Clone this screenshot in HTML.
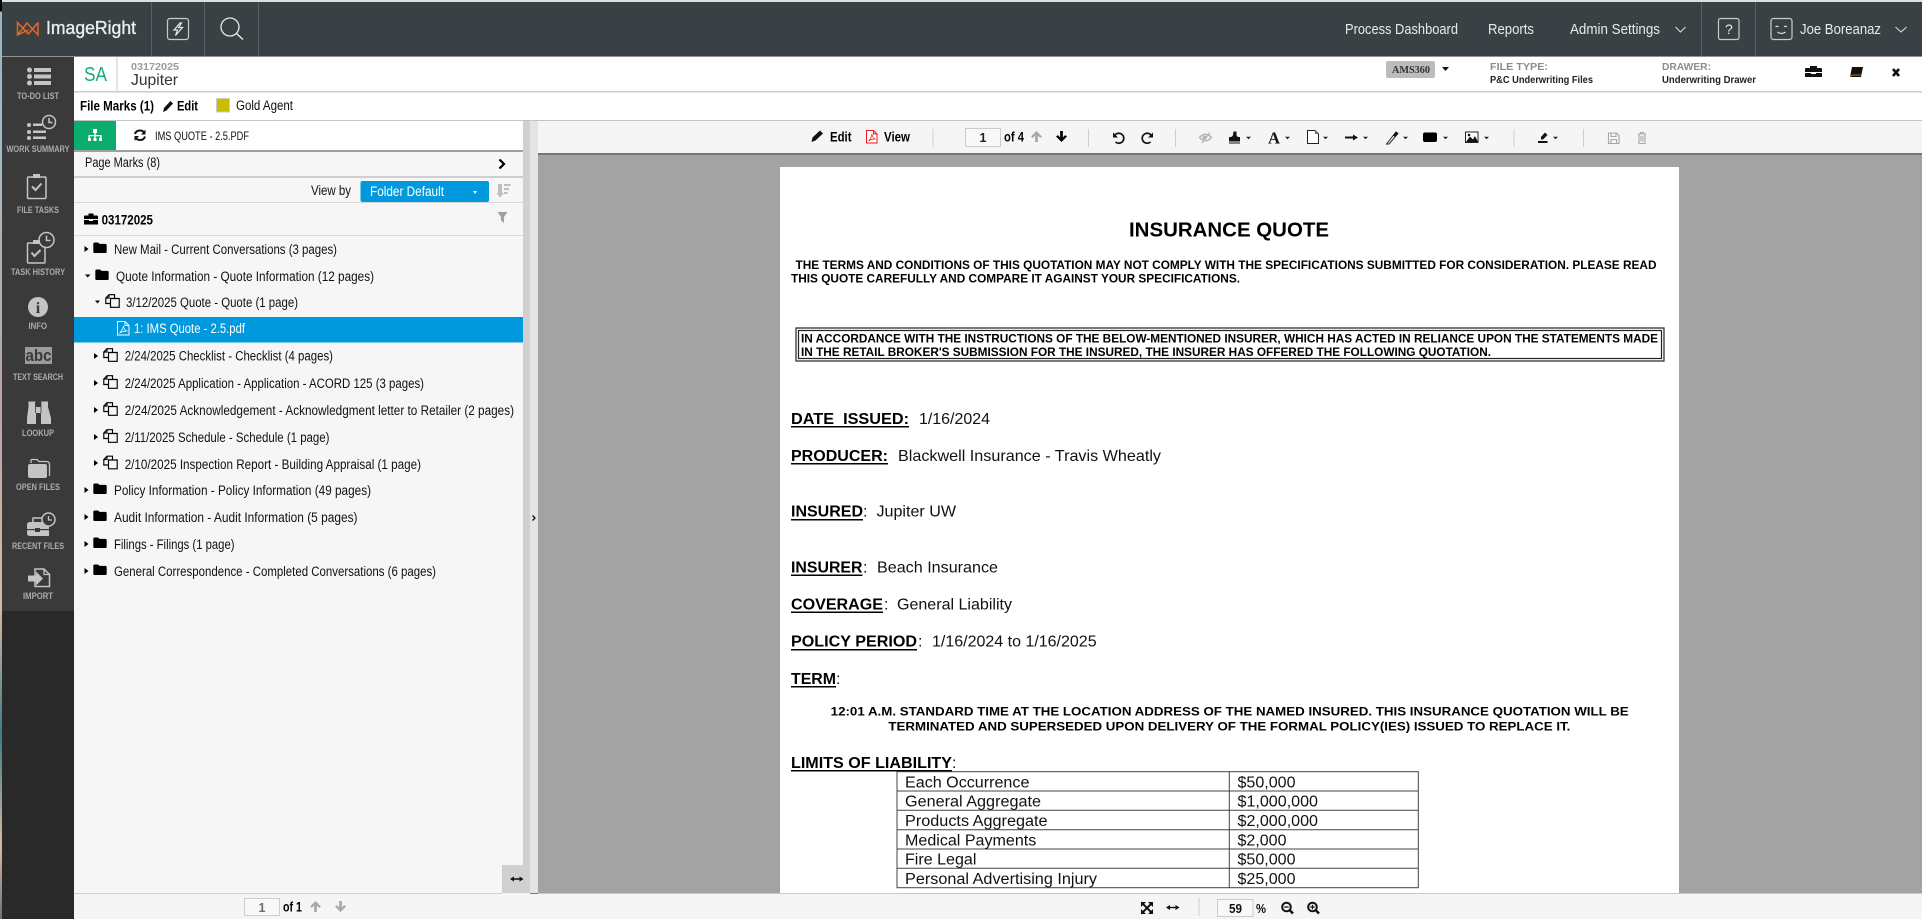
<!DOCTYPE html>
<html><head><meta charset="utf-8"><title>ImageRight</title>
<style>
html,body{margin:0;padding:0;background:#f6f6f6;width:1922px;height:919px;overflow:hidden}
svg{display:block;position:absolute;left:0;top:0}
text{font-family:"Liberation Sans",sans-serif;white-space:pre}
.t{font-size:13.5px;fill:#111;transform:translateY(-.8px)}
.b{font-size:13.5px;fill:#000;font-weight:bold;transform:translateY(-.5px)}
.n{font-size:14.5px;fill:#e8eaea}
.s{font-size:9.5px;fill:#a8acb0;font-weight:bold}
.g{font-size:10.5px;fill:#8c8c8c;font-weight:bold}
.d{font-size:10.5px;fill:#222;font-weight:bold}
.h{font-size:16px;fill:#000;font-weight:bold}
.v{font-size:16px;fill:#111}
.c{font-size:12px;fill:#000;font-weight:bold}
.r{font-size:15.5px;fill:#111}
</style></head><body>
<svg width="1922" height="919" viewBox="0 0 1922 919" xmlns="http://www.w3.org/2000/svg">
<defs>
<linearGradient id="strip" x1="0" y1="0" x2="0" y2="1">
<stop offset="0" stop-color="#000"/><stop offset=".012" stop-color="#000"/><stop offset=".013" stop-color="#9cb4c0"/><stop offset=".17" stop-color="#a5b8c2"/><stop offset=".44" stop-color="#b9a3a6"/><stop offset=".66" stop-color="#d8b8a4"/><stop offset=".8" stop-color="#3f7c84"/><stop offset=".92" stop-color="#d8b8a4"/><stop offset="1" stop-color="#6a7378"/>
</linearGradient>
<symbol id="folder" viewBox="0 0 14 11"><path d="M0 1.5Q0 0 1.5 0H5L6.500 1.500H12.500Q14 1.500 14 3V9.500Q14 11 12.500 11H1.500Q0 11 0 9.500Z" fill="#000"/></symbol>
<symbol id="docs" viewBox="0 0 15 14"><path d="M5.500 9.500H.8V4L4 .7H9.500V4.500M4 .7V4H.8M5.500 4.500H14.200V13.300H5.500Z" fill="none" stroke="#000" stroke-width="1.150"/></symbol>
<symbol id="tri" viewBox="0 0 4 6"><path d="M0 0L4 3L0 6Z" fill="#000"/></symbol>
<symbol id="up" viewBox="0 0 12 12"><path d="M6 0L12 6L10 7.500L7.500 5V12H4.500V5L2 7.500L0 6Z"/></symbol>
<symbol id="down" viewBox="0 0 12 12"><path d="M6 12L12 6L10 4.500L7.500 7V0H4.500V7L2 4.500L0 6Z"/></symbol>
<symbol id="car" viewBox="0 0 6 3"><path d="M0 0H6L3 3Z" fill="#222"/></symbol>
</defs>

<!-- base -->
<rect width="1922" height="919" fill="#f6f6f6"/>
<!-- viewer -->
<rect x="538" y="121" width="1384" height="798" fill="#a3a3a3"/>
<!-- document page -->
<rect x="780" y="167" width="899" height="727" fill="#fff"/>
<text class="h" style="font-size:20.500px" x="1129" y="236.500" textLength="200" lengthAdjust="spacingAndGlyphs">INSURANCE QUOTE</text>
<text class="c" x="795.500" y="269" textLength="861" lengthAdjust="spacingAndGlyphs">THE TERMS AND CONDITIONS OF THIS QUOTATION MAY NOT COMPLY WITH THE SPECIFICATIONS SUBMITTED FOR CONSIDERATION. PLEASE READ</text>
<text class="c" x="791" y="282.700" textLength="449" lengthAdjust="spacingAndGlyphs">THIS QUOTE CAREFULLY AND COMPARE IT AGAINST YOUR SPECIFICATIONS.</text>
<rect x="796" y="328" width="868" height="33" fill="none" stroke="#222" stroke-width="1.200"/>
<rect x="798.500" y="330.500" width="863" height="28" fill="none" stroke="#222" stroke-width="1.200"/>
<text class="c" x="801" y="342.300" textLength="857" lengthAdjust="spacingAndGlyphs">IN ACCORDANCE WITH THE INSTRUCTIONS OF THE BELOW-MENTIONED INSURER, WHICH HAS ACTED IN RELIANCE UPON THE STATEMENTS MADE</text>
<text class="c" x="801" y="356" textLength="690" lengthAdjust="spacingAndGlyphs">IN THE RETAIL BROKER'S SUBMISSION FOR THE INSURED, THE INSURER HAS OFFERED THE FOLLOWING QUOTATION.</text>

<text class="h" x="791" y="424" textLength="118" lengthAdjust="spacingAndGlyphs">DATE  ISSUED:</text><rect x="791" y="426" width="118" height="1.500"/>
<text class="v" x="919" y="424" textLength="71" lengthAdjust="spacingAndGlyphs">1/16/2024</text>
<text class="h" x="791" y="461" textLength="97" lengthAdjust="spacingAndGlyphs">PRODUCER:</text><rect x="791" y="463" width="97" height="1.500"/>
<text class="v" x="898" y="461" textLength="263" lengthAdjust="spacingAndGlyphs">Blackwell Insurance - Travis Wheatly</text>
<text class="h" x="791" y="516.700" textLength="72" lengthAdjust="spacingAndGlyphs">INSURED</text><rect x="791" y="519" width="72" height="1.500"/><text class="v" x="863" y="516.700">:</text>
<text class="v" x="876.500" y="516.700" textLength="79.500" lengthAdjust="spacingAndGlyphs">Jupiter UW</text>
<text class="h" x="791" y="572.300" textLength="71.500" lengthAdjust="spacingAndGlyphs">INSURER</text><rect x="791" y="574.500" width="71.500" height="1.500"/><text class="v" x="863" y="572.300">:</text>
<text class="v" x="877" y="572.300" textLength="121" lengthAdjust="spacingAndGlyphs">Beach Insurance</text>
<text class="h" x="791" y="609.300" textLength="92" lengthAdjust="spacingAndGlyphs">COVERAGE</text><rect x="791" y="611.500" width="92" height="1.500"/><text class="v" x="884" y="609.300">:</text>
<text class="v" x="897" y="609.300" textLength="115" lengthAdjust="spacingAndGlyphs">General Liability</text>
<text class="h" x="791" y="646.700" textLength="126" lengthAdjust="spacingAndGlyphs">POLICY PERIOD</text><rect x="791" y="649" width="126" height="1.500"/><text class="v" x="918" y="646.700">:</text>
<text class="v" x="932" y="646.700" textLength="164.600" lengthAdjust="spacingAndGlyphs">1/16/2024 to 1/16/2025</text>
<text class="h" x="791" y="684" textLength="45" lengthAdjust="spacingAndGlyphs">TERM</text><rect x="791" y="686" width="45" height="1.500"/><text class="v" x="836" y="684">:</text>
<text class="c" x="830.700" y="715.300" textLength="798" lengthAdjust="spacingAndGlyphs">12:01 A.M. STANDARD TIME AT THE LOCATION ADDRESS OF THE NAMED INSURED. THIS INSURANCE QUOTATION WILL BE</text>
<text class="c" x="888.400" y="730.300" textLength="682" lengthAdjust="spacingAndGlyphs">TERMINATED AND SUPERSEDED UPON DELIVERY OF THE FORMAL POLICY(IES) ISSUED TO REPLACE IT.</text>
<text class="h" x="791" y="768" textLength="161" lengthAdjust="spacingAndGlyphs">LIMITS OF LIABILITY</text><rect x="791" y="770" width="161" height="1.500"/><text class="v" x="952" y="768">:</text>
<g fill="none" stroke="#444" stroke-width="1">
<rect x="897" y="771.700" width="521.300" height="116"/>
<path d="M897 791H1418M897 810.300H1418M897 829.700H1418M897 849H1418M897 868.300H1418M1229.300 772V888"/>
</g>
<text class="r" x="905" y="787.300" textLength="124.400" lengthAdjust="spacingAndGlyphs">Each Occurrence</text>
<text class="r" x="905" y="806.700" textLength="136" lengthAdjust="spacingAndGlyphs">General Aggregate</text>
<text class="r" x="905" y="826" textLength="142.600" lengthAdjust="spacingAndGlyphs">Products Aggregate</text>
<text class="r" x="905" y="845.300" textLength="131.300" lengthAdjust="spacingAndGlyphs">Medical Payments</text>
<text class="r" x="905" y="864.700" textLength="71.400" lengthAdjust="spacingAndGlyphs">Fire Legal</text>
<text class="r" x="905" y="884" textLength="192" lengthAdjust="spacingAndGlyphs">Personal Advertising Injury</text>
<text class="r" x="1237.500" y="787.300" textLength="58" lengthAdjust="spacingAndGlyphs">$50,000</text>
<text class="r" x="1237.500" y="806.700" textLength="80.500" lengthAdjust="spacingAndGlyphs">$1,000,000</text>
<text class="r" x="1237.500" y="826" textLength="80.500" lengthAdjust="spacingAndGlyphs">$2,000,000</text>
<text class="r" x="1237.500" y="845.300" textLength="49" lengthAdjust="spacingAndGlyphs">$2,000</text>
<text class="r" x="1237.500" y="864.700" textLength="58" lengthAdjust="spacingAndGlyphs">$50,000</text>
<text class="r" x="1237.500" y="884" textLength="58" lengthAdjust="spacingAndGlyphs">$25,000</text>

<!-- left strip & topbar -->
<rect x="0" y="0" width="2" height="919" fill="url(#strip)"/>
<rect x="2" y="0" width="1920" height="2" fill="#dcdfe0"/>
<rect x="2" y="2" width="1920" height="54" fill="#394145"/>
<rect x="2" y="56" width="1920" height="1" fill="#8d9295"/>
<g fill="#596165"><rect x="151" y="2" width="1" height="54"/><rect x="204" y="2" width="1" height="54"/><rect x="258" y="2" width="1" height="54"/><rect x="1701" y="2" width="1" height="54"/><rect x="1755" y="2" width="1" height="54"/></g>
<path d="M28.500 30L17.500 35V22.500L28.500 34M27.500 22.500L17.500 35M38 22.500V35L27.500 23.500M38 22.500L28 34.500" fill="none" stroke="#e8642c" stroke-width="1.500"/>
<text x="46" y="34" style="font-size:18.500px;fill:#eceeee;stroke:#eceeee;stroke-width:.35" textLength="90" lengthAdjust="spacingAndGlyphs">ImageRight</text>
<rect x="167.500" y="18.500" width="21" height="21" rx="2.500" fill="none" stroke="#c8cbcc" stroke-width="1.200"/>
<path d="M180 23L174 30H177.500L175.500 35.500L182.500 27.500H178.500L181.500 23Z" fill="none" stroke="#e4e6e6" stroke-width="1.200"/>
<circle cx="230" cy="27" r="9" fill="none" stroke="#e6e8e8" stroke-width="1.300"/><path d="M236.500 33.500L243 39.500" stroke="#e6e8e8" stroke-width="1.500"/>
<text class="n" x="1345" y="34" textLength="113" lengthAdjust="spacingAndGlyphs">Process Dashboard</text>
<text class="n" x="1488" y="34" textLength="46" lengthAdjust="spacingAndGlyphs">Reports</text>
<text class="n" x="1570" y="34" textLength="90" lengthAdjust="spacingAndGlyphs">Admin Settings</text>
<path d="M1675.500 27L1680.500 32L1685.500 27" fill="none" stroke="#d5d8d8" stroke-width="1.100"/>
<rect x="1718.500" y="18.500" width="20.500" height="21" rx="2" fill="none" stroke="#c8cbcc" stroke-width="1.200"/>
<text class="n" x="1725" y="34" style="font-size:14px">?</text>
<rect x="1771" y="18.500" width="21" height="21" rx="2.500" fill="none" stroke="#c8cbcc" stroke-width="1.200"/>
<path d="M1775.500 27Q1777 25.500 1778.500 27M1784 27Q1785.500 25.500 1787 27M1777.500 32Q1781.500 35 1785.500 32" fill="none" stroke="#dfe1e1" stroke-width="1.100"/>
<text class="n" x="1800" y="34" textLength="81" lengthAdjust="spacingAndGlyphs">Joe Boreanaz</text>
<path d="M1895.500 27L1901 32L1906.500 27" fill="none" stroke="#d5d8d8" stroke-width="1.100"/>

<!-- sidebar -->
<rect x="2" y="57" width="72" height="554" fill="#3a3a3a"/>
<rect x="2" y="611" width="72" height="308" fill="#292929"/>
<g fill="#c4c4c4">
<circle cx="29.500" cy="70" r="2.500"/><circle cx="29.500" cy="76.500" r="2.500"/><circle cx="29.500" cy="83" r="2.500"/>
<rect x="34" y="68" width="17" height="4"/><rect x="34" y="74.500" width="17" height="4"/><rect x="34" y="81" width="17" height="4"/>
<circle cx="29" cy="125" r="2"/><circle cx="29" cy="132" r="2"/><circle cx="29" cy="138" r="2"/>
<rect x="33" y="123.500" width="9" height="2.500"/><rect x="33" y="130.500" width="13" height="2.500"/><rect x="33" y="136.500" width="13" height="2.500"/>
</g>
<g fill="none" stroke="#c4c4c4" stroke-width="1.500">
<circle cx="49" cy="122" r="6.500"/><path d="M49 118V122.500H52.500"/>
<rect x="27.500" y="177" width="18.500" height="21.500" rx="1"/><path d="M32 186.500L35.500 190L41.500 183.500" stroke-width="2"/>
<rect x="27.500" y="243" width="17.500" height="20" rx="1"/><path d="M31.500 252.500L34.500 256L40.500 250" stroke-width="2"/>
<circle cx="46.500" cy="240" r="7.500" fill="#3a3a3a"/><path d="M46.500 235.500V240.500H50.500"/>
</g>
<rect x="33" y="174" width="7" height="4" fill="#c4c4c4"/><rect x="33" y="240" width="7" height="4" fill="#c4c4c4"/>
<circle cx="38" cy="307" r="10" fill="#c4c4c4"/><text x="38" y="313" text-anchor="middle" style="font-family:'Liberation Serif',serif;font-size:16px;font-weight:bold;fill:#3a3a3a">i</text>
<rect x="25" y="347" width="27" height="17" fill="#9a9a9a"/><text x="25.500" y="361" style="font-size:17px;font-weight:bold;fill:#3a3a3a" textLength="26" lengthAdjust="spacingAndGlyphs">abc</text>
<path d="M28.500 401.500H35.500V407H41V401.500H48V407L51 418V424H41V413H36V424H27V418L28.500 407Z" fill="#c4c4c4"/><path d="M35.500 402V413M41 402V413" stroke="#3a3a3a" stroke-width=".8"/>
<path d="M31 463V460.500Q31 459.500 32 459.500H37L39 461.500H46Q49.500 461.500 49.500 464.500V476" fill="none" stroke="#c4c4c4" stroke-width="1.300"/>
<rect x="28" y="464" width="19" height="14" rx="2" fill="#c4c4c4"/>
<path d="M27 525Q27 522 30 522H49V536H30Q27 536 27 533Z" fill="#c4c4c4"/><rect x="27" y="529" width="22" height="1.200" fill="#3a3a3a"/><rect x="35" y="528" width="5" height="4" fill="#3a3a3a"/><path d="M33 522V518H44V522" fill="none" stroke="#c4c4c4" stroke-width="1.500"/>
<circle cx="48.500" cy="519.500" r="6.500" fill="#3a3a3a" stroke="#c4c4c4" stroke-width="1.500"/><path d="M48.500 516V520H52" fill="none" stroke="#c4c4c4" stroke-width="1.300"/>
<path d="M35 586.500V569H44L49.500 574.500V586.500Z" fill="none" stroke="#c4c4c4" stroke-width="1.500"/><path d="M44 569V574.500H49.500" fill="none" stroke="#c4c4c4" stroke-width="1.300"/><path d="M28 575.500H36V571.500L43 578.500L36 585.500V581.500H28Z" fill="#c4c4c4"/>
<text class="s" x="17" y="99" textLength="42" lengthAdjust="spacingAndGlyphs">TO-DO LIST</text>
<text class="s" x="6.500" y="152" textLength="63" lengthAdjust="spacingAndGlyphs">WORK SUMMARY</text>
<text class="s" x="17" y="213" textLength="42" lengthAdjust="spacingAndGlyphs">FILE TASKS</text>
<text class="s" x="11" y="275" textLength="54" lengthAdjust="spacingAndGlyphs">TASK HISTORY</text>
<text class="s" x="28.500" y="329" textLength="18.500" lengthAdjust="spacingAndGlyphs">INFO</text>
<text class="s" x="13" y="380" textLength="50" lengthAdjust="spacingAndGlyphs">TEXT SEARCH</text>
<text class="s" x="22" y="436" textLength="32" lengthAdjust="spacingAndGlyphs">LOOKUP</text>
<text class="s" x="16" y="490" textLength="44" lengthAdjust="spacingAndGlyphs">OPEN FILES</text>
<text class="s" x="12" y="549" textLength="52" lengthAdjust="spacingAndGlyphs">RECENT FILES</text>
<text class="s" x="23" y="599" textLength="30" lengthAdjust="spacingAndGlyphs">IMPORT</text>

<!-- header row -->
<rect x="74" y="57" width="1848" height="34" fill="#fff"/>
<rect x="74" y="91" width="1848" height="1.500" fill="#ccc"/>
<rect x="116.500" y="57" width="1" height="34" fill="#ccc"/>
<text x="84" y="81" style="font-size:20px;fill:#12ad74" textLength="23" lengthAdjust="spacingAndGlyphs">SA</text>
<text x="131" y="70" style="font-size:10.500px;font-weight:bold;fill:#9b9b9b" textLength="48" lengthAdjust="spacingAndGlyphs">03172025</text>
<text x="131" y="85" style="font-size:16px;fill:#333" textLength="47" lengthAdjust="spacingAndGlyphs">Jupiter</text>
<rect x="1386" y="61" width="49" height="17" rx="2" fill="#bcbcbc"/>
<text x="1392" y="73" style="font-family:'Liberation Serif',serif;font-size:10px;font-weight:bold;fill:#333" textLength="38" lengthAdjust="spacingAndGlyphs">AMS360</text>
<path d="M1442 67H1449L1445.500 71Z" fill="#111"/>
<text class="g" x="1490" y="70" textLength="58" lengthAdjust="spacingAndGlyphs">FILE TYPE:</text>
<text class="d" x="1490" y="83" textLength="103" lengthAdjust="spacingAndGlyphs">P&amp;C Underwriting Files</text>
<text class="g" x="1662" y="70" textLength="49" lengthAdjust="spacingAndGlyphs">DRAWER:</text>
<text class="d" x="1662" y="83" textLength="94" lengthAdjust="spacingAndGlyphs">Underwriting Drawer</text>
<path d="M1805 69Q1805 68 1806 68H1810V66H1817V68H1821Q1822 68 1822 69V72H1805ZM1805 73H1811V74H1816V73H1822V77H1805Z" fill="#111"/>
<path d="M1852 67H1863L1861 77H1850Z" fill="#111"/><path d="M1850 77Q1851 75 1853 75H1861" stroke="#e88a30" stroke-width=".8" fill="none"/>
<path d="M1893 69L1899 76M1899 69L1893 76" stroke="#111" stroke-width="2.600"/>

<!-- file marks row -->
<rect x="74" y="92.500" width="1848" height="27.500" fill="#fff"/>
<rect x="74" y="120" width="1848" height="1.200" fill="#c4c4c4"/>
<text class="b" x="80" y="111" textLength="74" lengthAdjust="spacingAndGlyphs">File Marks (1)</text>
<path d="M163 112L164 108L170.500 101L173 103.500L166.500 110.500Z" fill="#111"/>
<text class="b" x="177" y="111" textLength="21" lengthAdjust="spacingAndGlyphs">Edit</text>
<rect x="216.500" y="98.500" width="13" height="13.500" fill="#c5bf00" stroke="#ccc"/>
<text class="t" x="236" y="111" textLength="57" lengthAdjust="spacingAndGlyphs">Gold Agent</text>

<!-- left panel -->
<rect x="74" y="121" width="449" height="29" fill="#fff"/>
<rect x="74" y="121" width="42" height="29" fill="#0bad6d"/>
<path d="M93 129H97V133H93ZM94.300 133H95.700V135H101.500V138H100V136.300H95.700V138H94.300V136.300H90V138H88.500V135H94.300Z M88 138H91V141H88ZM93.500 138H96.500V141H93.500ZM99 138H102V141H99Z" fill="#fff"/>
<g fill="none" stroke="#111" stroke-width="2"><path d="M135 134Q136 130.500 140 130.500Q143 130.500 144.500 133"/><path d="M145 136.500Q144 140 140 140Q137 140 135.500 137.500"/></g>
<path d="M145.500 129.500V134.500H141ZM134.500 141V136H139Z" fill="#111"/>
<text x="155" y="140" style="font-size:11.500px;fill:#111" textLength="94" lengthAdjust="spacingAndGlyphs">IMS QUOTE - 2.5.PDF</text>
<rect x="74" y="150" width="449" height="2" fill="#a0a0a0"/>
<text class="t" x="85" y="168" textLength="75" lengthAdjust="spacingAndGlyphs">Page Marks (8)</text>
<path d="M499.500 159.500L504 164L499.500 168.500" fill="none" stroke="#000" stroke-width="2.200"/>
<rect x="74" y="176" width="449" height="2" fill="#cfcfcf"/>
<text class="t" x="311" y="196" textLength="40" lengthAdjust="spacingAndGlyphs">View by</text>
<rect x="360.500" y="181" width="128.500" height="21" rx="2" fill="#0099dd"/>
<text class="t" style="fill:#fff" x="370" y="197" textLength="74" lengthAdjust="spacingAndGlyphs">Folder Default</text>
<path d="M473 191H477L475 194Z" fill="#fff"/>
<g fill="#bdbdbd"><path d="M498 184H502V193H504L500 197.500L496.500 193H498Z"/><rect x="504" y="184" width="6.500" height="2"/><rect x="504" y="188" width="5" height="2"/><rect x="504" y="192" width="3.500" height="2"/></g>
<rect x="74" y="202" width="449" height="1" fill="#d8d8d8"/>
<path d="M84 216.500Q84 215.500 85 215.500H88.500V213.500H93.500V215.500H97Q98 215.500 98 216.500V219H84ZM84 220H89V221H93V220H98V224.500H84Z" fill="#000"/>
<text class="b" x="101.600" y="225" textLength="51.400" lengthAdjust="spacingAndGlyphs">03172025</text>
<path d="M497.500 212H507.500L504 217V223L501 220.500V217Z" fill="#a0a0a0"/>
<rect x="74" y="235" width="449" height="1" fill="#dcdcdc"/>

<!-- tree -->
<use href="#tri" x="84.500" y="246" width="4" height="6"/><use href="#folder" x="93" y="242.500" width="14" height="10.500"/>
<text class="t" x="114" y="255" textLength="223" lengthAdjust="spacingAndGlyphs">New Mail - Current Conversations (3 pages)</text>
<path d="M85 274.500H90.500L87.700 277.500Z" fill="#000"/><use href="#folder" x="95" y="269.500" width="14" height="10.500"/>
<text class="t" x="116" y="282" textLength="258" lengthAdjust="spacingAndGlyphs">Quote Information - Quote Information (12 pages)</text>
<path d="M95 300.500H100L97.500 303.500Z" fill="#000"/><use href="#docs" x="105" y="294" width="15" height="14"/>
<text class="t" x="126" y="308" textLength="172" lengthAdjust="spacingAndGlyphs">3/12/2025 Quote - Quote (1 page)</text>

<rect x="74" y="317" width="449" height="25.500" fill="#0099dd"/>
<path d="M117.500 321.500H125L129 325.500V335H117.500Z M125 321.500V325.500H129" fill="none" stroke="#fff" stroke-width="1"/>
<path d="M119.500 333Q122 331 123.500 326Q124 331 127.500 331Q123 331 119.500 333Z" fill="none" stroke="#fff" stroke-width=".8"/>
<text class="t" style="fill:#fff" x="134" y="334" textLength="111" lengthAdjust="spacingAndGlyphs">1: IMS Quote - 2.5.pdf</text>

<use href="#tri" x="94" y="353" width="4" height="6"/><use href="#docs" x="103" y="348" width="15" height="14"/>
<text class="t" x="124.700" y="361.500" textLength="208.300" lengthAdjust="spacingAndGlyphs">2/24/2025 Checklist - Checklist (4 pages)</text>
<use href="#tri" x="94" y="380" width="4" height="6"/><use href="#docs" x="103" y="375" width="15" height="14"/>
<text class="t" x="124.700" y="388.700" textLength="299.300" lengthAdjust="spacingAndGlyphs">2/24/2025 Application - Application - ACORD 125 (3 pages)</text>
<use href="#tri" x="94" y="407" width="4" height="6"/><use href="#docs" x="103" y="402" width="15" height="14"/>
<text class="t" x="124.700" y="415.700" textLength="389.300" lengthAdjust="spacingAndGlyphs">2/24/2025 Acknowledgement - Acknowledgment letter to Retailer (2 pages)</text>
<use href="#tri" x="94" y="434" width="4" height="6"/><use href="#docs" x="103" y="429" width="15" height="14"/>
<text class="t" x="124.700" y="443" textLength="204.800" lengthAdjust="spacingAndGlyphs">2/11/2025 Schedule - Schedule (1 page)</text>
<use href="#tri" x="94" y="460" width="4" height="6"/><use href="#docs" x="103" y="455.500" width="15" height="14"/>
<text class="t" x="124.700" y="470" textLength="296.300" lengthAdjust="spacingAndGlyphs">2/10/2025 Inspection Report - Building Appraisal (1 page)</text>
<use href="#tri" x="84.500" y="487" width="4" height="6"/><use href="#folder" x="93" y="483.500" width="14" height="10.500"/>
<text class="t" x="114" y="496" textLength="257" lengthAdjust="spacingAndGlyphs">Policy Information - Policy Information (49 pages)</text>
<use href="#tri" x="84.500" y="514" width="4" height="6"/><use href="#folder" x="93" y="510.500" width="14" height="10.500"/>
<text class="t" x="114" y="523" textLength="243.500" lengthAdjust="spacingAndGlyphs">Audit Information - Audit Information (5 pages)</text>
<use href="#tri" x="84.500" y="541" width="4" height="6"/><use href="#folder" x="93" y="537.500" width="14" height="10.500"/>
<text class="t" x="114" y="550" textLength="120.500" lengthAdjust="spacingAndGlyphs">Filings - Filings (1 page)</text>
<use href="#tri" x="84.500" y="568" width="4" height="6"/><use href="#folder" x="93" y="564.500" width="14" height="10.500"/>
<text class="t" x="114" y="577" textLength="322" lengthAdjust="spacingAndGlyphs">General Correspondence - Completed Conversations (6 pages)</text>

<!-- splitter -->
<rect x="523" y="121" width="7" height="772" fill="#d0d0d0"/>
<rect x="530" y="121" width="8" height="772" fill="#e4e4e4"/>
<path d="M532.500 515.500L535 518L532.500 520.500" fill="none" stroke="#111" stroke-width="1.300"/>
<rect x="502" y="865" width="28" height="28" fill="#d0d0d0"/>
<path d="M511 879H522.500" stroke="#111" stroke-width="1.500"/><path d="M514 876.500L510 879L514 881.500ZM519.500 876.500L523.500 879L519.500 881.500Z" fill="#111"/>

<!-- viewer toolbar -->
<rect x="538" y="121" width="1384" height="32" fill="#f5f5f5"/>
<rect x="538" y="153" width="1384" height="2" fill="#767676"/>
<path d="M811.500 142L812.500 137.500L820 130.500L823 133.500L815.500 140.500Z" fill="#111"/>
<text class="b" x="830" y="142" textLength="21.500" lengthAdjust="spacingAndGlyphs">Edit</text>
<path d="M866.500 130.500H873.500L877 134V143H866.500Z M873.500 130.500V134H877" fill="#fff" stroke="#e81a1a" stroke-width="1"/>
<path d="M868.500 141Q871 139 872 134Q872.500 138.500 875.500 139Q871.500 139 868.500 141Z" fill="none" stroke="#e81a1a" stroke-width=".7"/>
<text class="b" x="884" y="142" textLength="26" lengthAdjust="spacingAndGlyphs">View</text>
<rect x="932.500" y="129" width="1" height="18" fill="#cfcfcf"/>
<rect x="965.500" y="128.500" width="35" height="18" fill="#f8f8f8" stroke="#ccc"/>
<text x="983" y="142" text-anchor="middle" style="font-size:12.500px;font-weight:bold;fill:#222">1</text>
<text class="b" x="1004" y="142" textLength="20" lengthAdjust="spacingAndGlyphs">of 4</text>
<use href="#up" x="1031" y="131" width="11" height="11" fill="#a8a8a8"/>
<use href="#down" x="1056" y="131" width="11" height="11" fill="#000"/>
<rect x="1088" y="129" width="1" height="18" fill="#cfcfcf"/>
<g fill="none" stroke="#111" stroke-width="1.700">
<path d="M1115 135A5 5 0 1 1 1115.500 142"/>
<path d="M1151 135A5 5 0 1 0 1150.500 142"/>
</g>
<path d="M1113 132.500V137.500H1118ZM1153 132.500V137.500H1148Z" fill="#111"/>
<rect x="1175" y="129" width="1" height="18" fill="#cfcfcf"/>
<path d="M1199.500 137.500Q1205.500 131 1211.500 137.500Q1205.500 144 1199.500 137.500ZM1202 143L1210 132.500" fill="none" stroke="#b4b4b4" stroke-width="1.400"/><circle cx="1204.500" cy="137.500" r="2" fill="#b4b4b4"/>
<path d="M1233.500 131.500H1236.500V135Q1236.500 136 1238 137H1240V141.500H1229V137H1231Q1233 136 1233 135ZM1229 142.500H1240V143.500H1229Z" fill="#111"/>
<use href="#car" x="1246" y="136.500" width="5" height="3"/>
<text x="1268" y="143.500" style="font-family:'Liberation Serif',serif;font-size:17px;font-weight:bold;fill:#111" textLength="12" lengthAdjust="spacingAndGlyphs">A</text>
<use href="#car" x="1285" y="136.500" width="5" height="3"/>
<path d="M1307.500 130.500H1315L1318.500 134V143.500H1307.500Z" fill="#fff" stroke="#222" stroke-width="1"/><path d="M1315 130.500V134H1318.500Z" fill="#777"/>
<use href="#car" x="1323" y="136.500" width="5" height="3"/>
<path d="M1345 137.500H1354" stroke="#111" stroke-width="2"/><path d="M1353 134.500L1358 137.500L1353 140.500Z" fill="#111"/>
<use href="#car" x="1363" y="136.500" width="5" height="3"/>
<path d="M1386.500 144L1396 132L1398 133.500L1389 144Z" fill="#fff" stroke="#222" stroke-width="1"/><path d="M1393 135.500L1396 132L1398 133.500L1395 137Z" fill="#111"/>
<use href="#car" x="1403" y="136.500" width="5" height="3"/>
<rect x="1423" y="132.500" width="14" height="9.500" rx="2" fill="#000"/>
<use href="#car" x="1443" y="136.500" width="5" height="3"/>
<rect x="1465.500" y="132" width="12.500" height="10.500" fill="#fff" stroke="#222"/><path d="M1466 142L1470 136.500L1473 139.500L1475 136L1478 142Z" fill="#111"/><circle cx="1469" cy="135" r="1.300" fill="#111"/>
<use href="#car" x="1484" y="136.500" width="5" height="3"/>
<rect x="1513.500" y="129" width="1" height="18" fill="#cfcfcf"/>
<path d="M1541 137L1545 132.500L1547.500 135L1543 139.500H1541Z" fill="#111"/><rect x="1538" y="141" width="9.500" height="2" fill="#111"/>
<use href="#car" x="1553" y="136.500" width="5" height="3"/>
<rect x="1583" y="129" width="1" height="18" fill="#cfcfcf"/>
<path d="M1608.500 133H1616.500L1619 135.500V143.500H1608.500ZM1611 133V136.500H1616V133M1611 143.500V139.500H1616.500V143.500" fill="none" stroke="#a8a8a8" stroke-width="1.100"/>
<path d="M1638 134H1646M1640.500 134V132.500H1643.500V134M1639 134.500V143.500H1645V134.500M1641 136V141.500M1643 136V141.500" fill="none" stroke="#a8a8a8" stroke-width="1.100"/>

<!-- bottom bars -->
<rect x="74" y="893" width="1848" height="26" fill="#f5f5f5"/>
<rect x="74" y="893" width="428" height="1" fill="#cfcfcf"/>
<rect x="530" y="893" width="1392" height="1" fill="#c8c8c8"/>
<rect x="530" y="893" width="8" height="1" fill="#777"/>
<rect x="244.500" y="898.500" width="35" height="17" fill="#f8f8f8" stroke="#ccc"/>
<text x="262" y="912" text-anchor="middle" style="font-size:12.500px;font-weight:bold;fill:#6d6d6d">1</text>
<text class="b" x="283" y="912" textLength="19" lengthAdjust="spacingAndGlyphs">of 1</text>
<use href="#up" x="310" y="901" width="11" height="11" fill="#a8a8a8"/>
<use href="#down" x="335" y="901" width="11" height="11" fill="#a8a8a8"/>
<path d="M1141.500 902.500L1152.500 913.500M1152.500 902.500L1141.500 913.500" stroke="#111" stroke-width="2"/>
<path d="M1141 902H1146L1141 907ZM1153 902H1148L1153 907ZM1141 914H1146L1141 909ZM1153 914H1148L1153 909Z" fill="#111"/>
<path d="M1167 907.500H1178.500" stroke="#111" stroke-width="1.400"/><path d="M1170 905L1166 907.500L1170 910ZM1175.500 905L1179.500 907.500L1175.500 910Z" fill="#111"/>
<rect x="1198.500" y="898" width="1" height="18" fill="#cfcfcf"/>
<rect x="1217.500" y="899.500" width="35.500" height="17" fill="#f8f8f8" stroke="#ccc"/>
<text x="1229" y="913" style="font-size:12.500px;font-weight:bold;fill:#111" textLength="13" lengthAdjust="spacingAndGlyphs">59</text>
<text x="1256" y="913" style="font-size:13px;font-weight:bold;fill:#111" textLength="10" lengthAdjust="spacingAndGlyphs">%</text>
<g fill="none" stroke="#111">
<circle cx="1286.500" cy="907" r="4.300" stroke-width="2"/><path d="M1289.800 910.300L1293 913.500" stroke-width="2.500"/><path d="M1284.300 907H1288.700" stroke-width="1.300"/>
<circle cx="1312.500" cy="907" r="4.300" stroke-width="2"/><path d="M1315.800 910.300L1319 913.500" stroke-width="2.500"/><path d="M1310.300 907H1314.700M1312.500 904.800V909.200" stroke-width="1.300"/>
</g>
</svg>
</body></html>
